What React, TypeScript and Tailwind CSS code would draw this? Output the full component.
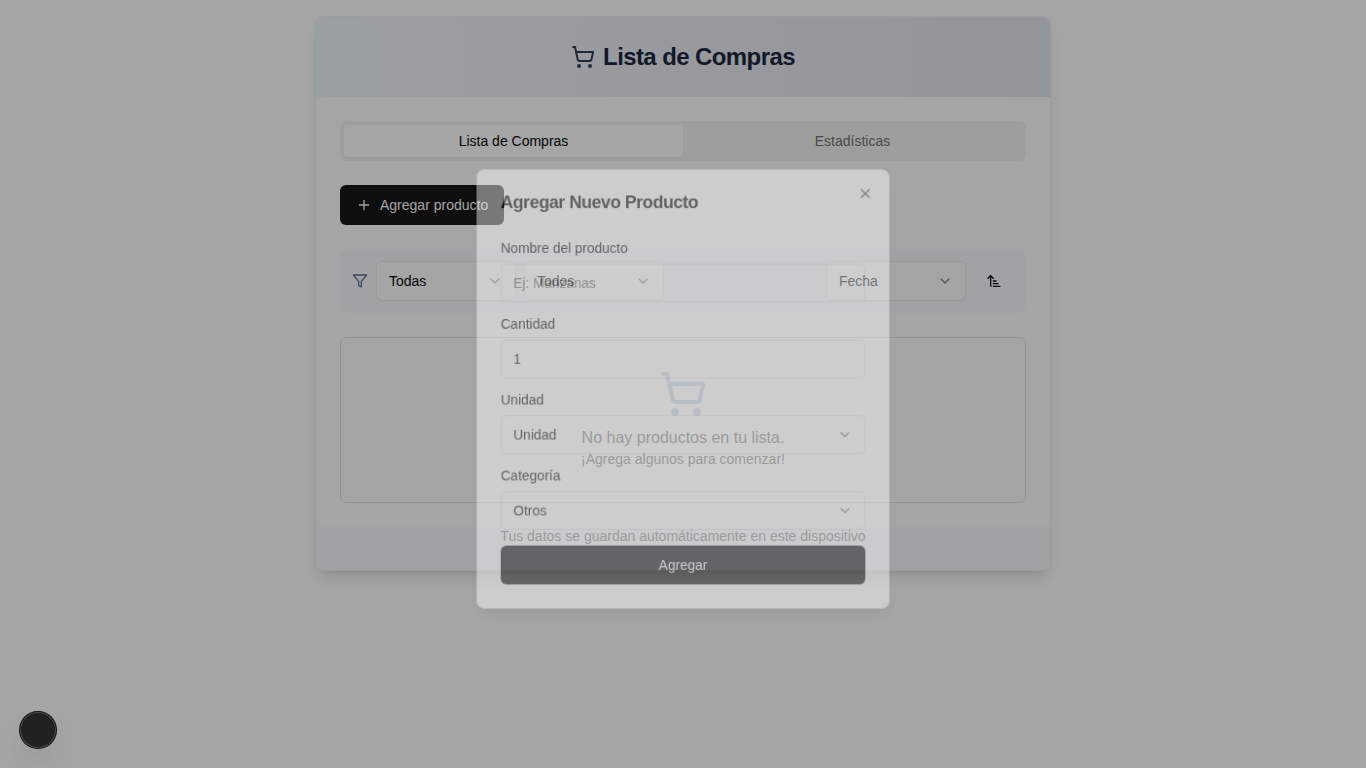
import React from "react";
import { ShoppingCart, Plus, ChevronDown, ArrowUpNarrowWide, X } from "lucide-react";

function SelectBox({ label, className }: { label: string; className: string }) {
  return (
    <button
      className={`flex h-10 items-center justify-between rounded-md border border-[#ebebeb] bg-white px-3 py-2 text-sm ${className}`}
    >
      <span>{label}</span>
      <ChevronDown className="h-4 w-4 opacity-50" />
    </button>
  );
}

function FilterIcon() {
  return (
    <svg
      className="h-4 w-4 text-slate-500"
      viewBox="0 0 24 24"
      fill="none"
      stroke="currentColor"
      strokeWidth="2"
      strokeLinecap="round"
      strokeLinejoin="round"
    >
      <polygon points="22 3 2 3 10 12.46 10 19 14 21 14 12.46 22 3" />
    </svg>
  );
}

function Field({ label, children }: { label: string; children: React.ReactNode }) {
  return (
    <div className="flex flex-col gap-2">
      <label className="pb-px text-sm leading-[13px] font-medium">{label}</label>
      {children}
    </div>
  );
}

function ProductDialog() {
  return (
    <div
      role="dialog"
      className="fixed top-1/2 left-1/2 flex w-[425px] -translate-x-1/2 -translate-y-[48.9%] scale-[0.9723] flex-col rounded-lg border border-[#ebebeb] bg-white p-6 opacity-[0.445] shadow-lg will-change-transform"
    >
      <h2 className="mb-8 text-lg leading-none font-semibold tracking-tight">Agregar Nuevo Producto</h2>
      <div className="mb-4 flex flex-col gap-4">
        <Field label="Nombre del producto">
          <input
            placeholder="Ej: Manzanas"
            className="h-10 w-full rounded-md border border-[#ebebeb] bg-transparent px-3 py-2 text-sm placeholder:text-[#737373]"
          />
        </Field>
        <Field label="Cantidad">
          <input
            defaultValue="1"
            className="h-10 w-full rounded-md border border-[#ebebeb] bg-transparent px-3 py-2 text-sm"
          />
        </Field>
        <Field label="Unidad">
          <SelectBox label="Unidad" className="w-full" />
        </Field>
        <Field label="Categoría">
          <SelectBox label="Otros" className="w-full" />
        </Field>
      </div>
      <button className="h-10 rounded-md bg-[#171717] text-sm font-medium text-[#fafafa]">Agregar</button>
      <button className="absolute top-4 right-4 opacity-70" aria-label="Cerrar">
        <X className="h-4 w-4" />
      </button>
    </div>
  );
}

export default function App() {
  return (
    <div className="min-h-screen bg-white font-['Liberation_Sans',Arial,sans-serif] text-[#0a0a0a]">
      <main className="mx-auto max-w-3xl p-4">
        <div className="rounded-lg border border-[#f0f0f0] bg-white shadow-lg">
          <header className="flex h-20 items-center justify-center gap-2 rounded-t-lg bg-[linear-gradient(to_right,#f0f7fb,#e9edf5_50%,#e2e8f0)] p-6">
            <ShoppingCart className="h-6 w-6 text-slate-700" />
            <h1 className="text-2xl font-bold tracking-tight text-slate-800">Lista de Compras</h1>
          </header>

          <div className="flex flex-col gap-6 p-6">
            <div className="grid h-10 grid-cols-2 rounded-md bg-[#f5f5f5] p-1 text-sm font-medium text-[#737373]">
              <button className="rounded-sm bg-white text-[#0a0a0a] shadow-xs">Lista de Compras</button>
              <button>Estadísticas</button>
            </div>

            <button className="flex h-10 items-center gap-2 self-start rounded-md bg-[#171717] px-4 text-sm font-medium text-[#fafafa]">
              <Plus className="h-4 w-4" />
              Agregar producto
            </button>

            <div className="flex items-center justify-between rounded-lg bg-slate-50 p-3">
              <div className="flex items-center gap-2">
                <FilterIcon />
                <SelectBox label="Todas" className="w-[140px]" />
                <SelectBox label="Todos" className="w-[140px]" />
              </div>
              <div className="flex items-center gap-2">
                <SelectBox label="Fecha" className="w-[140px]" />
                <button className="flex h-10 w-10 items-center justify-center" aria-label="Orden">
                  <ArrowUpNarrowWide className="h-4 w-4" />
                </button>
              </div>
            </div>

            <div className="flex flex-col items-center rounded-md border border-[#e5e5e5] p-8 text-[#737373]">
              <ShoppingCart className="mb-2 h-12 w-12 text-slate-300" />
              <p>No hay productos en tu lista.</p>
              <p className="pb-[2px] text-sm leading-[18px]">¡Agrega algunos para comenzar!</p>
            </div>
          </div>

          <footer className="flex justify-center rounded-b-lg bg-slate-50 px-6 pb-[25px] text-sm leading-[18px] text-[#737373]">
            Tus datos se guardan automáticamente en este dispositivo
          </footer>
        </div>
      </main>

      <div className="fixed bottom-5 left-5 h-9 w-9 rounded-full bg-[#333333] shadow-[0_0_0_1px_#171717,inset_0_0_0_1px_#707070,0_16px_32px_-8px_rgba(0,0,0,0.24)]" />

      <div className="fixed inset-0 bg-black/[0.354]" />
      <ProductDialog />
    </div>
  );
}
